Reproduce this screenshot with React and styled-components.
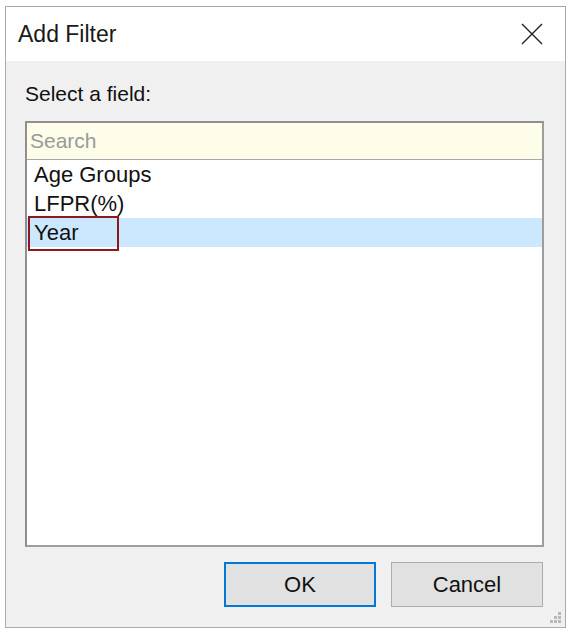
import styled, { createGlobalStyle } from "styled-components";

const GlobalStyle = createGlobalStyle`
  html, body {
    margin: 0;
    background: #ffffff;
  }
  body {
    font-family: "Liberation Sans", Arial, sans-serif;
  }
`;

const Page = styled.div`
  padding: 6px 6px 0 5px;
`;

const Window = styled.div`
  width: 559px;
  height: 620px;
  border: 1px solid #a9a9a9;
  display: flex;
  flex-direction: column;
  background: #f0f0f0;
  position: relative;
`;

const TitleBar = styled.div`
  height: 54px;
  background: #ffffff;
  display: flex;
  align-items: center;
  justify-content: space-between;
  padding: 0 22px 0 12px;
  flex-shrink: 0;
`;

const Title = styled.div`
  font-size: 23px;
  color: #1a1a1a;
  margin-top: 0;
`;

const CloseButton = styled.div`
  width: 22px;
  height: 22px;
  display: flex;
  align-items: center;
  justify-content: center;
`;

const Body = styled.div`
  flex: 1;
  display: flex;
  flex-direction: column;
  padding: 20px 21px 20px 19px;
`;

const Label = styled.div`
  font-size: 21px;
  color: #111;
  line-height: 25px;
  margin-bottom: 15px;
`;

const ListBox = styled.div`
  flex: 1;
  border: 2px solid #9d9d9d;
  border-top-color: #8f8f8f;
  border-left-color: #8f8f8f;
  background: #ffffff;
  display: flex;
  flex-direction: column;
`;

const SearchField = styled.input`
  height: 36px;
  border: none;
  border-bottom: 1px solid #a8a8a8;
  background: #fdfde9;
  font-family: inherit;
  font-size: 21px;
  padding: 0 0 0 3px;
  outline: none;
  &::placeholder {
    color: #9a9a9a;
  }
`;

const Row = styled.div`
  height: 29px;
  display: flex;
  align-items: center;
  padding-left: 1px;
  font-size: 22px;
  color: #111;
  background: ${(p) => (p.$selected ? "#cce8ff" : "transparent")};
`;

const RowText = styled.span`
  display: inline-flex;
  align-items: center;
  height: 31px;
  padding: 0 39px 0 4px;
  border: ${(p) => (p.$focused ? "2px solid #8b1a1f" : "2px solid transparent")};
  margin-top: ${(p) => (p.$focused ? "1px" : "0")};
`;

const Footer = styled.div`
  display: flex;
  justify-content: flex-end;
  gap: 15px;
  margin: 15px 1px 0 0;
`;

const Button = styled.button`
  width: 152px;
  height: 45px;
  background: #e1e1e1;
  border: ${(p) => (p.$primary ? "2px solid #0078d7" : "1px solid #adadad")};
  font-family: inherit;
  font-size: 22px;
  color: #111;
  padding: 0;
`;

const Grip = styled.svg`
  position: absolute;
  right: 3px;
  bottom: 3px;
`;

const fields = ["Age Groups", "LFPR(%)", "Year"];

export default function App() {
  return (
    <Page>
      <GlobalStyle />
      <Window>
        <TitleBar>
          <Title>Add Filter</Title>
          <CloseButton>
            <svg width="22" height="22" viewBox="0 0 22 22">
              <path d="M1 1 L21 21 M21 1 L1 21" stroke="#222" strokeWidth="1.4" fill="none" />
            </svg>
          </CloseButton>
        </TitleBar>
        <Body>
          <Label>Select a field:</Label>
          <ListBox>
            <SearchField placeholder="Search" />
            {fields.map((f) => (
              <Row key={f} $selected={f === "Year"}>
                <RowText $focused={f === "Year"}>{f}</RowText>
              </Row>
            ))}
          </ListBox>
          <Footer>
            <Button $primary>OK</Button>
            <Button>Cancel</Button>
          </Footer>
        </Body>
        <Grip width="12" height="12" viewBox="0 0 12 12">
          {[
            [8, 0],
            [4, 4],
            [8, 4],
            [0, 8],
            [4, 8],
            [8, 8],
          ].map(([x, y]) => (
            <rect key={`${x}-${y}`} x={x} y={y} width="3" height="3" fill="#b8b8b8" />
          ))}
        </Grip>
      </Window>
    </Page>
  );
}
